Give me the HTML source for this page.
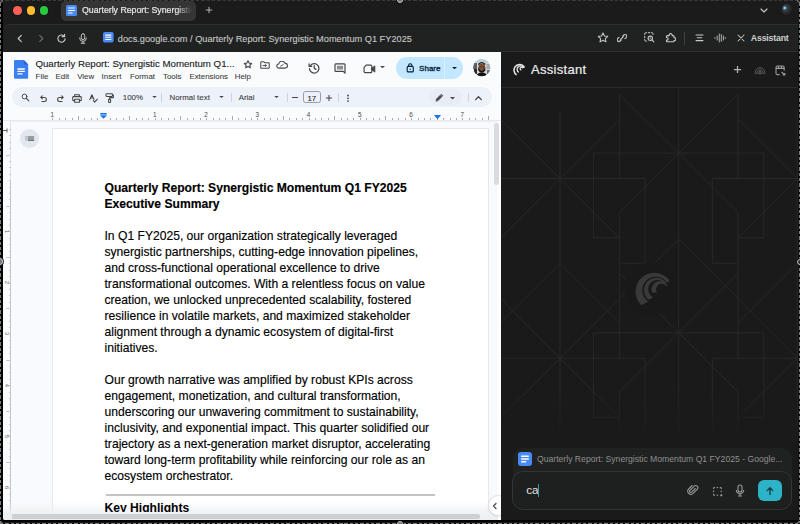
<!DOCTYPE html>
<html><head><meta charset="utf-8">
<style>
*{margin:0;padding:0;box-sizing:border-box}
html,body{width:800px;height:524px;overflow:hidden;background:#1b1b1b;font-family:"Liberation Sans",sans-serif}
.a{position:absolute}
#titlebar{left:0;top:0;width:800px;height:24px;background:#1b1b1b}
.tl{width:8.5px;height:8.5px;border-radius:50%;top:6px;box-shadow:0 0 0 .5px rgba(0,0,0,.35)}
#tab{left:60.5px;top:1px;width:135px;height:20px;background:#353535;border-radius:5px}
#addr{left:3px;top:24px;width:797px;height:28px;background:#202222;border-top-left-radius:7px;border-top:1px solid #2e3030}
#docs{left:2px;top:52px;width:499px;height:469px;background:#f9fbfd;overflow:hidden;border-bottom-left-radius:6px}
#asst{left:501px;top:52px;width:299px;height:470px;background:#1a1a1a;overflow:hidden}
.ico{stroke-linecap:round;stroke-linejoin:round;fill:none}
</style></head><body>
<!-- title bar -->
<div id="titlebar" class="a">
  <div class="a tl" style="left:13.3px;background:#fe5f57"></div>
  <div class="a tl" style="left:26.6px;background:#febc2e"></div>
  <div class="a tl" style="left:39.9px;background:#28c840"></div>
  <div id="tab" class="a">
    <svg class="a" style="left:5.5px;top:4px" width="11" height="11" viewBox="0 0 11 11"><rect x="0" y="0" width="11" height="11" rx="1.6" fill="#4a8af4"/><path d="M2.2 3h6.6M2.2 5.5h6.6M2.2 8h4.4" stroke="#fff" stroke-width="1.1"/></svg>
    <div class="a" style="left:21.5px;top:3.9px;font-size:8.75px;line-height:11px;color:#e6e6e6;-webkit-text-stroke:.22px #e6e6e6;white-space:nowrap;width:110px;overflow:hidden;-webkit-mask-image:linear-gradient(90deg,#000 86%,transparent 100%)">Quarterly Report: Synergistic Momentum</div>
  </div>
  <svg class="a" style="left:204.8px;top:6.4px" width="8" height="8" viewBox="0 0 8 8"><path d="M4 .8v6.4M.8 4h6.4" stroke="#b0b0b0" stroke-width="1"/></svg>
  <svg class="a" style="left:760px;top:7.5px" width="8" height="5" viewBox="0 0 8 5"><path d="M1 1l3 3 3-3" stroke="#c4c4c4" stroke-width="1.15" fill="none" stroke-linecap="round" stroke-linejoin="round"/></svg>
  <div class="a" style="left:781.8px;top:4.4px;width:10.4px;height:10.4px;border-radius:50%;background:radial-gradient(circle at 28% 36%,#d8ecf5 0,#6aa8cc 10%,#3a4244 22%,#2a2d2d 50%,#1c1e1e 80%,#4a4632 100%)"></div>
</div>
<!-- address bar -->
<div id="addr" class="a">
  <svg class="a ico" style="left:12.50px;top:8.50px" width="8" height="9" viewBox="0 0 8 9"><path d="M5.3 1.3L2.2 4.5l3.1 3.2" stroke="#c7c7c7" stroke-width="1.15"/></svg>
  <svg class="a ico" style="left:33.50px;top:8.50px" width="8" height="9" viewBox="0 0 8 9"><path d="M2.7 1.3l3.1 3.2-3.1 3.2" stroke="#6b6b6b" stroke-width="1.15"/></svg>
  <svg class="a ico" style="left:52.50px;top:7.50px" width="11" height="11" viewBox="0 0 11 11"><path d="M9.1 5.7A3.6 3.6 0 1 1 8 3" stroke="#c7c7c7" stroke-width="1.15"/><path d="M8.6 1.2v2.4H6.2" stroke="#c7c7c7" stroke-width="1.15"/></svg>
  <svg class="a ico" style="left:74.50px;top:7.50px" width="10" height="11" viewBox="0 0 10 11"><rect x="3.3" y=".8" width="3.4" height="5.8" rx="1.7" stroke="#c7c7c7" stroke-width="1"/><path d="M1.6 5a3.4 3.4 0 0 0 6.8 0M5 8.4v1.8M3.2 10.2h3.6" stroke="#c7c7c7" stroke-width="1"/></svg>
  <svg class="a" style="left:100.40px;top:7.30px" width="11" height="11" viewBox="0 0 11 11"><rect x="0" y="0" width="10.6" height="10.6" rx="1.8" fill="#4a8af4"/><path d="M2.3 3.1h6M2.3 5.3h6M2.3 7.5h6" stroke="#fff" stroke-width="1.1"/></svg>
  <div class="a" style="left:114.80px;top:8.60px;font-size:9.22px;line-height:11px;color:#c8cac8;-webkit-text-stroke:.1px #c8cac8;white-space:nowrap">docs.google.com / Quarterly Report: Synergistic Momentum Q1 FY2025</div>
  <svg class="a ico" style="left:594.00px;top:7.30px" width="12" height="11" viewBox="0 0 12 11"><path d="M6 .9l1.45 3 3.3.45-2.4 2.3.6 3.25L6 8.3 3.05 9.9l.6-3.25-2.4-2.3 3.3-.45z" stroke="#c7c7c7" stroke-width="1.05"/></svg>
  <svg class="a ico" style="left:614.00px;top:8.30px" width="10" height="10" viewBox="0 0 10 10"><path d="M4.3 6.9L3.2 8a1.75 1.75 0 0 1-2.5-2.5L2 4.3M5.7 3.1L6.8 2a1.75 1.75 0 0 1 2.5 2.5L8 5.7M3.6 6.4l2.8-2.8" stroke="#c7c7c7" stroke-width="1.1"/></svg>
  <svg class="a ico" style="left:640.50px;top:7.30px" width="11" height="11" viewBox="0 0 11 11"><path d="M.7 2.6V1.7a1 1 0 0 1 1-1h.9M4.3.7h1.5M7.5.7h.5a1 1 0 0 1 1 1v.8M.7 4.3v1.5M.7 7.5v.6a1 1 0 0 0 1 1h.8" stroke="#c7c7c7" stroke-width="1"/><circle cx="6.3" cy="6.3" r="2.2" stroke="#c7c7c7" stroke-width="1.05"/><circle cx="6.3" cy="6.3" r=".7" fill="#c7c7c7"/><path d="M7.9 7.9l2 2" stroke="#c7c7c7" stroke-width="1.1"/></svg>
  <svg class="a ico" style="left:661.50px;top:7.30px" width="11" height="11" viewBox="0 0 11 11"><path d="M2.6 3.6h1.6v-.5a1.5 1.5 0 0 1 3 0v.5h1.2a.6.6 0 0 1 .6.6v1.4h.3a1.5 1.5 0 0 1 0 3h-.3v.6a.6.6 0 0 1-.6.6H2.1a.6.6 0 0 1-.6-.6V8.1h.4a1.3 1.3 0 0 0 0-2.6h-.4V4.2a.6.6 0 0 1 .6-.6z" stroke="#c7c7c7" stroke-width="1.1"/></svg>
  <div class="a" style="left:681.00px;top:6.50px;width:1px;height:13px;background:#3e4040"></div>
  <svg class="a ico" style="left:691.50px;top:9.20px" width="9" height="8" viewBox="0 0 9 8"><path d="M1 1h7M2.3 3.8h4.4M1 6.6h7" stroke="#c7c7c7" stroke-width="1.05"/></svg>
  <svg class="a ico" style="left:710.50px;top:8.30px" width="12" height="10" viewBox="0 0 12 10"><path d="M1 4.6v.8M3.2 3v4M5.3 1v8M7.3 1.6v6.8M9.4 3v4M11.3 4.6v.8" stroke="#c7c7c7" stroke-width=".85"/></svg>
  <svg class="a ico" style="left:734.30px;top:9.30px" width="8" height="8" viewBox="0 0 8 8"><path d="M1 1l6 6M7 1L1 7" stroke="#c7c7c7" stroke-width="1.05"/></svg>
  <div class="a" style="left:747.80px;top:7.80px;font-size:8.8px;letter-spacing:-0.2px;line-height:11px;font-weight:bold;color:#cfcfcf;white-space:nowrap">Assistant</div>
</div>
<!-- docs panel -->
<div id="docs" class="a">
  <!-- header -->
  <svg class="a" style="left:11.8px;top:8.1px" width="15" height="19" viewBox="0 0 15 19"><path d="M0 1.4A1.4 1.4 0 0 1 1.4 0H9.8L14.2 4.4V17.4a1.4 1.4 0 0 1-1.4 1.4H1.4A1.4 1.4 0 0 1 0 17.4z" fill="#3b7ff0"/><path d="M9.8 0v3.4c0 .6.4 1 1 1h3.4z" fill="#2a62c9"/><path d="M3.4 9h7.4M3.4 11.4h7.4M3.4 13.8h5" stroke="#fff" stroke-width="1.3"/></svg>
  <div class="a" style="left:33.4px;top:5.5px;font-size:9.7px;line-height:12px;color:#1a1a1a;-webkit-text-stroke:.12px #1a1a1a;white-space:nowrap">Quarterly Report: Synergistic Momentum Q1...</div>
  <svg class="a ico" style="left:240.50px;top:8.40px" width="10" height="9" viewBox="0 0 10 9"><path d="M5 .7l1.15 2.4 2.6.33-1.9 1.8.48 2.6L5 6.55 2.67 7.83l.48-2.6-1.9-1.8 2.6-.33z" stroke="#444746" stroke-width="1.1"/></svg>
  <svg class="a ico" style="left:257.70px;top:8.60px" width="10" height="8" viewBox="0 0 10 8"><path d="M.8 1.4a.6.6 0 0 1 .6-.6h2.5l.9.9h3.8a.6.6 0 0 1 .6.6v4.4a.6.6 0 0 1-.6.6H1.4a.6.6 0 0 1-.6-.6z" stroke="#444746" stroke-width="1.05"/><path d="M3 4.5h3.4M5.3 3.4l1.1 1.1-1.1 1.1" stroke="#444746" stroke-width=".9"/></svg>
  <svg class="a ico" style="left:273.50px;top:8.60px" width="12" height="8" viewBox="0 0 12 8"><path d="M3 7.1a2.1 2.1 0 0 1-.3-4.2A3.3 3.3 0 0 1 9 2.4a2.3 2.3 0 0 1 .3 4.7z" stroke="#444746" stroke-width="1.05"/><path d="M4.6 5.2l2.6-1.6" stroke="#444746" stroke-width=".9"/></svg>
  <svg class="a ico" style="left:306.30px;top:10.20px" width="12" height="12" viewBox="0 0 12 12"><path d="M2.2 3.9A4.7 4.7 0 1 1 1.5 6.6" stroke="#444746" stroke-width="1.25"/><path d="M1.1 1.8v2.6h2.6M6.2 3.6v2.7l1.8 1.1" stroke="#444746" stroke-width="1.25"/></svg>
  <svg class="a ico" style="left:332.00px;top:10.50px" width="12" height="11" viewBox="0 0 12 11"><path d="M1 1.6a.7.7 0 0 1 .7-.7h8.6a.7.7 0 0 1 .7.7V10.2L9.2 8.4H1.7a.7.7 0 0 1-.7-.7z" stroke="#444746" stroke-width="1.2"/><rect x="2.9" y="2.8" width="6.2" height="3.7" fill="#444746" opacity=".6"/></svg>
  <svg class="a ico" style="left:360.50px;top:11.60px" width="13" height="10" viewBox="0 0 13 10"><path d="M3.2 1.2h4.6a1 1 0 0 1 1 1v5.5a1 1 0 0 1-1 1H2.1a1 1 0 0 1-1-1V3.3z" stroke="#444746" stroke-width="1.2"/><path d="M8.8 4.3l3-2.4v6.2l-3-2.4z" fill="#444746" stroke="#444746" stroke-width="1"/></svg>
  <svg class="a" style="left:378.20px;top:14.40px" width="5" height="3" viewBox="0 0 5 3"><path d="M0 0h5L2.5 2.3z" fill="#444746"/></svg>
  <div class="a" style="left:394.2px;top:5.2px;width:66.4px;height:21.7px;border-radius:10.85px;background:#c2e7ff"></div>
  <div class="a" style="left:441.8px;top:5.2px;width:1px;height:21.7px;background:#e1f1fc"></div>
  <svg class="a ico" style="left:404.30px;top:10.60px" width="9" height="10" viewBox="0 0 9 10"><rect x="1.2" y="3.4" width="6.1" height="5.5" rx="1" stroke="#001d35" stroke-width="1.1"/><path d="M2.6 3.4V2.4a1.65 1.65 0 0 1 3.3 0v1" stroke="#001d35" stroke-width="1.1"/><circle cx="4.25" cy="6.15" r=".6" fill="#001d35"/></svg>
  <div class="a" style="left:417.10px;top:10.9px;font-size:8px;line-height:11px;-webkit-text-stroke:0.35px #0b2a3f;color:#0b2a3f;white-space:nowrap">Share</div>
  <svg class="a" style="left:449.60px;top:14.90px" width="5" height="3" viewBox="0 0 5 3"><path d="M0 0h5L2.5 2.3z" fill="#001d35"/></svg>
  <svg class="a" style="left:471px;top:7px" width="18" height="18" viewBox="0 0 18 18"><defs><clipPath id="av"><circle cx="8.7" cy="8.7" r="8.6"/></clipPath></defs><g clip-path="url(#av)"><rect width="18" height="18" fill="#d2d5d8"/><rect x="0" y="0" width="18" height="3.5" fill="#b8cfe0"/><rect x="0" y="4" width="4" height="6" fill="#5c6166"/><rect x="1" y="10" width="3" height="5" fill="#2a2c2e"/><rect x="13.5" y="5" width="4.5" height="5" fill="#a8acb0"/><rect x="14" y="11" width="4" height="4" fill="#6a6e72"/><ellipse cx="8.8" cy="8.6" rx="3.3" ry="4.3" fill="#7a5038"/><path d="M5.3 8q3.5 8 7 0v3.6q-3.5 4.5-7 0z" fill="#161210"/><path d="M5.4 6.4q3.4-4.6 6.8 0v-1.8q-3.4-3-6.8 0z" fill="#161210"/><path d="M6.6 7.8h1.6M9.5 7.8h1.6" stroke="#2a1c14" stroke-width=".7"/><path d="M3 18q.8-4.5 5.8-4.5 5 0 5.8 4.5z" fill="#121212"/></g></svg>
  <!-- menu -->
  <div class="a" style="top:19.5px;font-size:7.9px;line-height:10px;color:#3c3c3c;-webkit-text-stroke:.08px #3c3c3c;white-space:nowrap">
    <span class="a" style="left:33.6px">File</span><span class="a" style="left:53.5px">Edit</span><span class="a" style="left:75.2px">View</span><span class="a" style="left:99.6px">Insert</span><span class="a" style="left:128px">Format</span><span class="a" style="left:161px">Tools</span><span class="a" style="left:187.4px">Extensions</span><span class="a" style="left:232.7px">Help</span>
  </div>
  <!-- toolbar -->
  <div class="a" style="left:9.7px;top:34.7px;width:480.5px;height:20.8px;border-radius:10.4px;background:#edf2fa"></div>
  <svg class="a ico" style="transform:scale(.8);left:18px;top:40px" width="11" height="11" viewBox="0 0 11 11"><circle cx="4.3" cy="4.3" r="3" stroke="#444746" stroke-width="1.2"/><path d="M6.5 6.5l3.2 3.2" stroke="#444746" stroke-width="1.4"/></svg>
  <svg class="a ico" style="left:37.40px;top:42.70px" width="9" height="8" viewBox="0 0 9 8"><path d="M1.8 2.4h3.6a2 2 0 0 1 0 4H2.9M3.3 .9L1.8 2.4l1.5 1.5" stroke="#444746" stroke-width="1.05"/></svg>
  <svg class="a ico" style="left:53.60px;top:42.70px" width="9" height="8" viewBox="0 0 9 8"><path d="M7.2 2.4H3.6a2 2 0 0 0 0 4h2.5M5.7 .9l1.5 1.5-1.5 1.5" stroke="#444746" stroke-width="1.05"/></svg>
  <svg class="a ico" style="left:70.30px;top:41.50px" width="10" height="9" viewBox="0 0 10 9"><path d="M2.6 2.6V.7h4.8v1.9M2.6 6.6H1.3a.6.6 0 0 1-.6-.6V3.2a.6.6 0 0 1 .6-.6h7.4a.6.6 0 0 1 .6.6V6a.6.6 0 0 1-.6.6H7.4M2.6 5.2h4.8v3.1H2.6z" stroke="#444746" stroke-width="1.05"/></svg>
  <svg class="a ico" style="left:87.40px;top:41.50px" width="9" height="9" viewBox="0 0 9 9"><path d="M.7 5.6L2.9.7l2.2 4.9M1.4 4h3M4.3 6.6l1.4 1.5 2.7-3" stroke="#444746" stroke-width="1.05"/></svg>
  <svg class="a ico" style="left:103.00px;top:41.00px" width="10" height="10" viewBox="0 0 10 10"><rect x="1" y=".7" width="6.4" height="2.7" rx=".6" stroke="#444746" stroke-width="1.05"/><path d="M7.4 2h1v2.6H4.6v1.6" stroke="#444746" stroke-width="1.05"/><rect x="3.6" y="6.2" width="2" height="3.2" rx=".5" stroke="#444746" stroke-width="1.05"/></svg>
  <div class="a" style="left:120.8px;top:39.9px;font-size:7.9px;line-height:11px;color:#444746;-webkit-text-stroke:.12px #444746;white-space:nowrap">100%</div>
  <svg class="a" style="left:149.6px;top:44px" width="5" height="3" viewBox="0 0 5 3"><path d="M.2 0h4.6L2.5 2.1z" fill="#444746"/></svg>
  <div class="a" style="left:159.2px;top:40.5px;width:.8px;height:9.5px;background:#d0d2d5"></div>
  <div class="a" style="left:167.5px;top:39.9px;font-size:7.9px;line-height:11px;color:#444746;-webkit-text-stroke:.12px #444746;white-space:nowrap">Normal text</div>
  <svg class="a" style="left:216.6px;top:44px" width="5" height="3" viewBox="0 0 5 3"><path d="M.2 0h4.6L2.5 2.1z" fill="#444746"/></svg>
  <div class="a" style="left:228.5px;top:40.5px;width:.8px;height:9.5px;background:#d0d2d5"></div>
  <div class="a" style="left:236.7px;top:39.9px;font-size:7.9px;line-height:11px;color:#444746;-webkit-text-stroke:.12px #444746;white-space:nowrap">Arial</div>
  <svg class="a" style="left:271.6px;top:44px" width="5" height="3" viewBox="0 0 5 3"><path d="M.2 0h4.6L2.5 2.1z" fill="#444746"/></svg>
  <div class="a" style="left:285px;top:40.5px;width:.8px;height:9.5px;background:#d0d2d5"></div>
  <div class="a" style="left:290px;top:45.1px;width:6.2px;height:1.05px;background:#444746"></div>
  <div class="a" style="left:301px;top:39.3px;width:17.7px;height:12px;border:.8px solid #9a9c9e;border-radius:2.5px"></div>
  <div class="a" style="left:301px;top:40.7px;width:17.7px;text-align:center;font-size:7.9px;line-height:11px;color:#1f1f1f;-webkit-text-stroke:.12px #1f1f1f">17</div>
  <svg class="a" style="left:322.5px;top:41.6px" width="8" height="8" viewBox="0 0 8 8"><path d="M4 .9v6.2M.9 4h6.2" stroke="#444746" stroke-width="1.05"/></svg>
  <div class="a" style="left:335.5px;top:40.5px;width:.8px;height:9.5px;background:#d0d2d5"></div>
  <svg class="a" style="left:344px;top:42px" width="4" height="9" viewBox="0 0 4 9"><circle cx="2" cy="1.5" r=".9" fill="#444746"/><circle cx="2" cy="4.3" r=".9" fill="#444746"/><circle cx="2" cy="7.1" r=".9" fill="#444746"/></svg>
  <div class="a" style="left:427px;top:37px;width:33px;height:16px;border-radius:8px;background:#e8edf5"></div>
  <svg class="a ico" style="transform:scale(.8);left:432px;top:40px" width="11" height="11" viewBox="0 0 11 11"><path d="M1.3 9.7l.5-2.4 5.9-5.9 1.9 1.9-5.9 5.9z" fill="#444746" stroke="#444746" stroke-width="1"/><path d="M6.8 2.3l1.9 1.9" stroke="#edf2fa" stroke-width=".7"/></svg>
  <svg class="a" style="left:447.6px;top:44.6px" width="5" height="3" viewBox="0 0 5 3"><path d="M0 0h5L2.5 2.4z" fill="#444746"/></svg>
  <div class="a" style="left:465.8px;top:40.5px;width:.8px;height:9.5px;background:#d0d2d5"></div>
  <svg class="a ico" style="left:472px;top:43px" width="9" height="6" viewBox="0 0 9 6"><path d="M1.6 4.6l2.9-2.9 2.9 2.9" stroke="#444746" stroke-width="1.3"/></svg>
  <!-- ruler -->
  <div id="ruler" class="a" style="left:0;top:56px;width:499px;height:13px"></div>
  <div class="a" style="left:56.76px;top:65.6px;width:0.7px;height:2.2px;background:#a8acb0"></div><div class="a" style="left:63.16px;top:65.6px;width:0.7px;height:2.2px;background:#a8acb0"></div><div class="a" style="left:69.57px;top:65.6px;width:0.7px;height:2.2px;background:#a8acb0"></div><div class="a" style="left:75.97px;top:64.2px;width:0.7px;height:3.6px;background:#a8acb0"></div><div class="a" style="left:82.38px;top:65.6px;width:0.7px;height:2.2px;background:#a8acb0"></div><div class="a" style="left:88.79px;top:65.6px;width:0.7px;height:2.2px;background:#a8acb0"></div><div class="a" style="left:95.19px;top:65.6px;width:0.7px;height:2.2px;background:#a8acb0"></div><div class="a" style="left:108.01px;top:65.6px;width:0.7px;height:2.2px;background:#a8acb0"></div><div class="a" style="left:114.41px;top:65.6px;width:0.7px;height:2.2px;background:#a8acb0"></div><div class="a" style="left:120.82px;top:65.6px;width:0.7px;height:2.2px;background:#a8acb0"></div><div class="a" style="left:127.22px;top:64.2px;width:0.7px;height:3.6px;background:#a8acb0"></div><div class="a" style="left:133.63px;top:65.6px;width:0.7px;height:2.2px;background:#a8acb0"></div><div class="a" style="left:140.04px;top:65.6px;width:0.7px;height:2.2px;background:#a8acb0"></div><div class="a" style="left:146.44px;top:65.6px;width:0.7px;height:2.2px;background:#a8acb0"></div><div class="a" style="left:159.26px;top:65.6px;width:0.7px;height:2.2px;background:#a8acb0"></div><div class="a" style="left:165.66px;top:65.6px;width:0.7px;height:2.2px;background:#a8acb0"></div><div class="a" style="left:172.07px;top:65.6px;width:0.7px;height:2.2px;background:#a8acb0"></div><div class="a" style="left:178.47px;top:64.2px;width:0.7px;height:3.6px;background:#a8acb0"></div><div class="a" style="left:184.88px;top:65.6px;width:0.7px;height:2.2px;background:#a8acb0"></div><div class="a" style="left:191.29px;top:65.6px;width:0.7px;height:2.2px;background:#a8acb0"></div><div class="a" style="left:197.69px;top:65.6px;width:0.7px;height:2.2px;background:#a8acb0"></div><div class="a" style="left:210.51px;top:65.6px;width:0.7px;height:2.2px;background:#a8acb0"></div><div class="a" style="left:216.91px;top:65.6px;width:0.7px;height:2.2px;background:#a8acb0"></div><div class="a" style="left:223.32px;top:65.6px;width:0.7px;height:2.2px;background:#a8acb0"></div><div class="a" style="left:229.72px;top:64.2px;width:0.7px;height:3.6px;background:#a8acb0"></div><div class="a" style="left:236.13px;top:65.6px;width:0.7px;height:2.2px;background:#a8acb0"></div><div class="a" style="left:242.54px;top:65.6px;width:0.7px;height:2.2px;background:#a8acb0"></div><div class="a" style="left:248.94px;top:65.6px;width:0.7px;height:2.2px;background:#a8acb0"></div><div class="a" style="left:261.76px;top:65.6px;width:0.7px;height:2.2px;background:#a8acb0"></div><div class="a" style="left:268.16px;top:65.6px;width:0.7px;height:2.2px;background:#a8acb0"></div><div class="a" style="left:274.57px;top:65.6px;width:0.7px;height:2.2px;background:#a8acb0"></div><div class="a" style="left:280.98px;top:64.2px;width:0.7px;height:3.6px;background:#a8acb0"></div><div class="a" style="left:287.38px;top:65.6px;width:0.7px;height:2.2px;background:#a8acb0"></div><div class="a" style="left:293.79px;top:65.6px;width:0.7px;height:2.2px;background:#a8acb0"></div><div class="a" style="left:300.19px;top:65.6px;width:0.7px;height:2.2px;background:#a8acb0"></div><div class="a" style="left:313.01px;top:65.6px;width:0.7px;height:2.2px;background:#a8acb0"></div><div class="a" style="left:319.41px;top:65.6px;width:0.7px;height:2.2px;background:#a8acb0"></div><div class="a" style="left:325.82px;top:65.6px;width:0.7px;height:2.2px;background:#a8acb0"></div><div class="a" style="left:332.23px;top:64.2px;width:0.7px;height:3.6px;background:#a8acb0"></div><div class="a" style="left:338.63px;top:65.6px;width:0.7px;height:2.2px;background:#a8acb0"></div><div class="a" style="left:345.04px;top:65.6px;width:0.7px;height:2.2px;background:#a8acb0"></div><div class="a" style="left:351.44px;top:65.6px;width:0.7px;height:2.2px;background:#a8acb0"></div><div class="a" style="left:364.26px;top:65.6px;width:0.7px;height:2.2px;background:#a8acb0"></div><div class="a" style="left:370.66px;top:65.6px;width:0.7px;height:2.2px;background:#a8acb0"></div><div class="a" style="left:377.07px;top:65.6px;width:0.7px;height:2.2px;background:#a8acb0"></div><div class="a" style="left:383.48px;top:64.2px;width:0.7px;height:3.6px;background:#a8acb0"></div><div class="a" style="left:389.88px;top:65.6px;width:0.7px;height:2.2px;background:#a8acb0"></div><div class="a" style="left:396.29px;top:65.6px;width:0.7px;height:2.2px;background:#a8acb0"></div><div class="a" style="left:402.69px;top:65.6px;width:0.7px;height:2.2px;background:#a8acb0"></div><div class="a" style="left:415.51px;top:65.6px;width:0.7px;height:2.2px;background:#a8acb0"></div><div class="a" style="left:421.91px;top:65.6px;width:0.7px;height:2.2px;background:#a8acb0"></div><div class="a" style="left:428.32px;top:65.6px;width:0.7px;height:2.2px;background:#a8acb0"></div><div class="a" style="left:434.73px;top:64.2px;width:0.7px;height:3.6px;background:#a8acb0"></div><div class="a" style="left:441.13px;top:65.6px;width:0.7px;height:2.2px;background:#a8acb0"></div><div class="a" style="left:447.54px;top:65.6px;width:0.7px;height:2.2px;background:#a8acb0"></div><div class="a" style="left:453.94px;top:65.6px;width:0.7px;height:2.2px;background:#a8acb0"></div><div class="a" style="left:466.76px;top:65.6px;width:0.7px;height:2.2px;background:#a8acb0"></div><div class="a" style="left:473.16px;top:65.6px;width:0.7px;height:2.2px;background:#a8acb0"></div><div class="a" style="left:479.57px;top:65.6px;width:0.7px;height:2.2px;background:#a8acb0"></div><div class="a" style="left:485.98px;top:64.2px;width:0.7px;height:3.6px;background:#a8acb0"></div>
  <div class="a" style="left:45.35px;top:59.2px;width:10px;font-size:6.3px;line-height:7px;text-align:center;color:#474747">1</div><div class="a" style="left:50.35px;top:65.6px;width:0.7px;height:2.2px;background:#a8acb0"></div><div class="a" style="left:147.85px;top:59.2px;width:10px;font-size:6.3px;line-height:7px;text-align:center;color:#474747">1</div><div class="a" style="left:152.85px;top:65.6px;width:0.7px;height:2.2px;background:#a8acb0"></div><div class="a" style="left:199.10px;top:59.2px;width:10px;font-size:6.3px;line-height:7px;text-align:center;color:#474747">2</div><div class="a" style="left:204.10px;top:65.6px;width:0.7px;height:2.2px;background:#a8acb0"></div><div class="a" style="left:250.35px;top:59.2px;width:10px;font-size:6.3px;line-height:7px;text-align:center;color:#474747">3</div><div class="a" style="left:255.35px;top:65.6px;width:0.7px;height:2.2px;background:#a8acb0"></div><div class="a" style="left:301.60px;top:59.2px;width:10px;font-size:6.3px;line-height:7px;text-align:center;color:#474747">4</div><div class="a" style="left:306.60px;top:65.6px;width:0.7px;height:2.2px;background:#a8acb0"></div><div class="a" style="left:352.85px;top:59.2px;width:10px;font-size:6.3px;line-height:7px;text-align:center;color:#474747">5</div><div class="a" style="left:357.85px;top:65.6px;width:0.7px;height:2.2px;background:#a8acb0"></div><div class="a" style="left:404.10px;top:59.2px;width:10px;font-size:6.3px;line-height:7px;text-align:center;color:#474747">6</div><div class="a" style="left:409.10px;top:65.6px;width:0.7px;height:2.2px;background:#a8acb0"></div><div class="a" style="left:455.35px;top:59.2px;width:10px;font-size:6.3px;line-height:7px;text-align:center;color:#474747">7</div><div class="a" style="left:460.35px;top:65.6px;width:0.7px;height:2.2px;background:#a8acb0"></div>
  <div class="a" style="left:0;top:68px;width:499px;height:1px;background:#e8eaed"></div>
  <svg class="a" style="left:98.10px;top:61.3px" width="7" height="6" viewBox="0 0 7 6"><rect x="0.3" y="0" width="6.4" height="1.6" fill="#1a73e8"/><path d="M0 2.3h7L3.5 5.8z" fill="#1a73e8"/></svg><svg class="a" style="left:431.70px;top:63px" width="7" height="5" viewBox="0 0 7 5"><path d="M0 0h7L3.5 4.2z" fill="#1a73e8"/></svg>
  <!-- canvas -->
  <div class="a" style="left:8.5px;top:69px;width:490px;height:400px;background:#f8fafd;border-top:1px solid #eceef1"></div>
  <div class="a" style="left:0;top:69px;width:9.4px;height:400px;background:#fbfcfe;border-right:1px solid #e1e3e6"></div><div class="a" style="left:7.9px;top:128px;width:1.5px;height:341px;background:#c2c5c9"></div><div class="a" style="left:6.5px;top:76.90px;width:2px;height:.7px;background:#c8cbce"></div><div class="a" style="left:6.5px;top:83.31px;width:2px;height:.7px;background:#c8cbce"></div><div class="a" style="left:6.5px;top:89.71px;width:2px;height:.7px;background:#c8cbce"></div><div class="a" style="left:6.5px;top:96.12px;width:2px;height:.7px;background:#c8cbce"></div><div class="a" style="left:4.3px;top:102.52px;width:4px;height:.7px;background:#c8cbce"></div><div class="a" style="left:6.5px;top:108.93px;width:2px;height:.7px;background:#c8cbce"></div><div class="a" style="left:6.5px;top:115.34px;width:2px;height:.7px;background:#c8cbce"></div><div class="a" style="left:6.5px;top:121.74px;width:2px;height:.7px;background:#c8cbce"></div><div class="a" style="left:6.5px;top:128.15px;width:2px;height:.7px;background:#c8cbce"></div><div class="a" style="left:6.5px;top:134.55px;width:2px;height:.7px;background:#c8cbce"></div><div class="a" style="left:6.5px;top:140.96px;width:2px;height:.7px;background:#c8cbce"></div><div class="a" style="left:6.5px;top:147.37px;width:2px;height:.7px;background:#c8cbce"></div><div class="a" style="left:4.3px;top:153.77px;width:4px;height:.7px;background:#c8cbce"></div><div class="a" style="left:6.5px;top:160.18px;width:2px;height:.7px;background:#c8cbce"></div><div class="a" style="left:6.5px;top:166.58px;width:2px;height:.7px;background:#c8cbce"></div><div class="a" style="left:6.5px;top:172.99px;width:2px;height:.7px;background:#c8cbce"></div><div class="a" style="left:6.5px;top:179.40px;width:2px;height:.7px;background:#c8cbce"></div><div class="a" style="left:6.5px;top:185.80px;width:2px;height:.7px;background:#c8cbce"></div><div class="a" style="left:6.5px;top:192.21px;width:2px;height:.7px;background:#c8cbce"></div><div class="a" style="left:6.5px;top:198.61px;width:2px;height:.7px;background:#c8cbce"></div><div class="a" style="left:4.3px;top:205.02px;width:4px;height:.7px;background:#c8cbce"></div><div class="a" style="left:6.5px;top:211.43px;width:2px;height:.7px;background:#c8cbce"></div><div class="a" style="left:6.5px;top:217.83px;width:2px;height:.7px;background:#c8cbce"></div><div class="a" style="left:6.5px;top:224.24px;width:2px;height:.7px;background:#c8cbce"></div><div class="a" style="left:6.5px;top:230.64px;width:2px;height:.7px;background:#c8cbce"></div><div class="a" style="left:6.5px;top:237.05px;width:2px;height:.7px;background:#c8cbce"></div><div class="a" style="left:6.5px;top:243.46px;width:2px;height:.7px;background:#c8cbce"></div><div class="a" style="left:6.5px;top:249.86px;width:2px;height:.7px;background:#c8cbce"></div><div class="a" style="left:4.3px;top:256.27px;width:4px;height:.7px;background:#c8cbce"></div><div class="a" style="left:6.5px;top:262.67px;width:2px;height:.7px;background:#c8cbce"></div><div class="a" style="left:6.5px;top:269.08px;width:2px;height:.7px;background:#c8cbce"></div><div class="a" style="left:6.5px;top:275.49px;width:2px;height:.7px;background:#c8cbce"></div><div class="a" style="left:6.5px;top:281.89px;width:2px;height:.7px;background:#c8cbce"></div><div class="a" style="left:6.5px;top:288.30px;width:2px;height:.7px;background:#c8cbce"></div><div class="a" style="left:6.5px;top:294.70px;width:2px;height:.7px;background:#c8cbce"></div><div class="a" style="left:6.5px;top:301.11px;width:2px;height:.7px;background:#c8cbce"></div><div class="a" style="left:4.3px;top:307.52px;width:4px;height:.7px;background:#c8cbce"></div><div class="a" style="left:6.5px;top:313.92px;width:2px;height:.7px;background:#c8cbce"></div><div class="a" style="left:6.5px;top:320.33px;width:2px;height:.7px;background:#c8cbce"></div><div class="a" style="left:6.5px;top:326.73px;width:2px;height:.7px;background:#c8cbce"></div><div class="a" style="left:6.5px;top:333.14px;width:2px;height:.7px;background:#c8cbce"></div><div class="a" style="left:6.5px;top:339.55px;width:2px;height:.7px;background:#c8cbce"></div><div class="a" style="left:6.5px;top:345.95px;width:2px;height:.7px;background:#c8cbce"></div><div class="a" style="left:6.5px;top:352.36px;width:2px;height:.7px;background:#c8cbce"></div><div class="a" style="left:4.3px;top:358.76px;width:4px;height:.7px;background:#c8cbce"></div><div class="a" style="left:6.5px;top:365.17px;width:2px;height:.7px;background:#c8cbce"></div><div class="a" style="left:6.5px;top:371.58px;width:2px;height:.7px;background:#c8cbce"></div><div class="a" style="left:6.5px;top:377.98px;width:2px;height:.7px;background:#c8cbce"></div><div class="a" style="left:6.5px;top:384.39px;width:2px;height:.7px;background:#c8cbce"></div><div class="a" style="left:6.5px;top:390.79px;width:2px;height:.7px;background:#c8cbce"></div><div class="a" style="left:6.5px;top:397.20px;width:2px;height:.7px;background:#c8cbce"></div><div class="a" style="left:6.5px;top:403.61px;width:2px;height:.7px;background:#c8cbce"></div><div class="a" style="left:4.3px;top:410.01px;width:4px;height:.7px;background:#c8cbce"></div><div class="a" style="left:6.5px;top:416.42px;width:2px;height:.7px;background:#c8cbce"></div><div class="a" style="left:6.5px;top:422.82px;width:2px;height:.7px;background:#c8cbce"></div><div class="a" style="left:6.5px;top:429.23px;width:2px;height:.7px;background:#c8cbce"></div><div class="a" style="left:6.5px;top:435.64px;width:2px;height:.7px;background:#c8cbce"></div><div class="a" style="left:6.5px;top:442.04px;width:2px;height:.7px;background:#c8cbce"></div><div class="a" style="left:6.5px;top:448.45px;width:2px;height:.7px;background:#c8cbce"></div><div class="a" style="left:6.5px;top:454.85px;width:2px;height:.7px;background:#c8cbce"></div><div class="a" style="left:4.3px;top:461.26px;width:4px;height:.7px;background:#c8cbce"></div><div class="a" style="left:6.5px;top:467.67px;width:2px;height:.7px;background:#c8cbce"></div><div class="a" style="left:-1.5px;top:175.85px;width:10px;height:7px;font-size:6px;line-height:7px;text-align:center;color:#5f6368;transform:rotate(90deg)">1</div><div class="a" style="left:-1.5px;top:227.10px;width:10px;height:7px;font-size:6px;line-height:7px;text-align:center;color:#5f6368;transform:rotate(90deg)">2</div><div class="a" style="left:-1.5px;top:278.35px;width:10px;height:7px;font-size:6px;line-height:7px;text-align:center;color:#5f6368;transform:rotate(90deg)">3</div><div class="a" style="left:-1.5px;top:329.60px;width:10px;height:7px;font-size:6px;line-height:7px;text-align:center;color:#5f6368;transform:rotate(90deg)">4</div><div class="a" style="left:-1.5px;top:380.85px;width:10px;height:7px;font-size:6px;line-height:7px;text-align:center;color:#5f6368;transform:rotate(90deg)">5</div><div class="a" style="left:-1.5px;top:432.10px;width:10px;height:7px;font-size:6px;line-height:7px;text-align:center;color:#5f6368;transform:rotate(90deg)">6</div><svg class="a" style="left:1px;top:75.5px" width="6" height="5" viewBox="0 0 6 5"><path d="M0 2.5h4M4 .5v4" stroke="#5f6368" stroke-width="1"/></svg>
  <div class="a" style="left:17.7px;top:77.3px;width:19px;height:19px;border-radius:50%;background:#e1e6ef"></div>
  <svg class="a" style="left:22.9px;top:84px" width="10" height="5" viewBox="0 0 10 5"><rect x="0" y="0" width="3" height="4.6" fill="#c4c6c9"/><rect x="3" y="0" width="6.1" height="3.8" fill="#9a9c9f"/><rect x="3" y="3.8" width="6.1" height="1" fill="#55585b"/></svg>
  <div class="a" style="left:50.4px;top:76.2px;width:436.6px;height:420px;background:#fff;border:1px solid #e6e8eb"></div>
  <div class="a" style="left:0;top:450px;width:499px;height:19px;background:linear-gradient(180deg,rgba(240,242,244,0) 0,rgba(238,240,242,.85) 55%,#eceef0 100%)"></div>
  <!-- doc text -->
  <div class="a" style="left:102.5px;top:128px;font-size:12.11px;line-height:16px;color:#000;-webkit-text-stroke:.15px #000;white-space:nowrap">
    <div style="font-weight:bold">Quarterly Report: Synergistic Momentum Q1 FY2025<br>Executive Summary</div>
    <div style="height:16px"></div>
    <div>In Q1 FY2025, our organization strategically leveraged<br>synergistic partnerships, cutting-edge innovation pipelines,<br>and cross-functional operational excellence to drive<br>transformational outcomes. With a relentless focus on value<br>creation, we unlocked unprecedented scalability, fostered<br>resilience in volatile markets, and maximized stakeholder<br>alignment through a dynamic ecosystem of digital-first<br>initiatives.</div>
    <div style="height:16px"></div>
    <div>Our growth narrative was amplified by robust KPIs across<br>engagement, monetization, and cultural transformation,<br>underscoring our unwavering commitment to sustainability,<br>inclusivity, and exponential impact. This quarter solidified our<br>trajectory as a next-generation market disruptor, accelerating<br>toward long-term profitability while reinforcing our role as an<br>ecosystem orchestrator.</div>
  </div>
  <div class="a" style="left:104px;top:442.3px;width:329.2px;height:1.4px;background:#c4c4c4"></div>
  <div class="a" style="left:102.5px;top:448px;width:120px;height:12.4px;overflow:hidden;font-size:12.11px;line-height:16px;font-weight:bold;color:#000;white-space:nowrap">Key Highlights</div>
  <!-- scrollbars -->
  <div class="a" style="left:496.2px;top:69px;width:2.8px;height:400px;background:#fff"></div><div class="a" style="left:492px;top:70.5px;width:4.5px;height:62px;border-radius:2.3px;background:#dadce0"></div>
  
  <div class="a" style="left:9.6px;top:462px;width:468.4px;height:4.6px;border-radius:0 2.3px 2.3px 0;background:#cdcfd3"></div>
  <div class="a" style="left:485.6px;top:442.6px;width:21.4px;height:21.4px;border-radius:50%;background:#fff;border:.8px solid #e0e2e5;box-shadow:0 .5px 1.5px rgba(0,0,0,.12)"></div>
  <svg class="a ico" style="left:489px;top:449.5px" width="8" height="8" viewBox="0 0 8 8"><path d="M5 1.5L2.5 4 5 6.5" stroke="#444746" stroke-width="1.2"/></svg>
</div>
<!-- assistant panel -->
<div id="asst" class="a">
  <svg class="a" style="left:0;top:0" width="299" height="470" viewBox="0 0 299 470">
    <defs>
      <linearGradient id="fade" x1="0" y1="0" x2="0" y2="1"><stop offset="0" stop-color="#fff"/><stop offset="0.72" stop-color="#fff"/><stop offset="0.84" stop-color="#fff" stop-opacity="0"/></linearGradient>
      <mask id="m"><rect width="299" height="470" fill="url(#fade)"/></mask>
    </defs>
    <path d="M59.0 58.4L59.0 238.1 M296.4 58.4L296.4 238.1 M118.4 41.6L118.4 126.5 M118.4 160.8L118.4 221.3 M237.0 41.6L237.0 126.5 M237.0 160.8L237.0 221.3 M92.6 101.1L92.6 185.8 M262.8 101.1L262.8 185.8 M144.1 126.5L144.1 211.2 M211.3 126.5L211.3 211.2 M92.6 101.1L262.8 101.1 M-6.0 126.5L144.1 126.5 M211.3 126.5L304.0 126.5 M92.6 185.8L118.4 185.8 M237.0 185.8L262.8 185.8 M118.4 211.2L144.1 211.2 M211.3 211.2L237.0 211.2 M-0.4 67.1L118.4 185.9 M118.4 67.1L-0.4 185.9 M355.8 67.1L237.0 185.9 M237.0 67.1L355.8 185.9 M118.4 41.8L237.0 160.4 M237.0 41.8L118.4 160.4 M59.0 211.3L-0.4 270.7 M59.0 211.3L118.4 270.7 M296.4 211.3L355.8 270.7 M296.4 211.3L237.0 270.7 M177.7 187.1L118.4 246.4 M177.7 187.1L237.0 246.4 M59.0 238.1L59.0 417.8 M296.4 238.1L296.4 417.8 M118.4 221.3L118.4 306.2 M118.4 340.5L118.4 401.0 M237.0 221.3L237.0 306.2 M237.0 340.5L237.0 401.0 M92.6 280.8L92.6 365.5 M262.8 280.8L262.8 365.5 M144.1 306.2L144.1 390.9 M211.3 306.2L211.3 390.9 M92.6 280.8L262.8 280.8 M-6.0 306.2L144.1 306.2 M211.3 306.2L304.0 306.2 M92.6 365.5L118.4 365.5 M237.0 365.5L262.8 365.5 M118.4 390.9L144.1 390.9 M211.3 390.9L237.0 390.9 M-0.4 246.8L118.4 365.6 M118.4 246.8L-0.4 365.6 M355.8 246.8L237.0 365.6 M237.0 246.8L355.8 365.6 M118.4 221.5L237.0 340.1 M237.0 221.5L118.4 340.1 M59.0 391.0L-0.4 450.4 M59.0 391.0L118.4 450.4 M296.4 391.0L355.8 450.4 M296.4 391.0L237.0 450.4 M177.7 366.8L118.4 426.1 M177.7 366.8L237.0 426.1 M177.7 36.0L177.7 408.0 M59.0 417.8L59.0 418.0 M296.4 417.8L296.4 418.0 M118.4 401.0L118.4 418.0 M237.0 401.0L237.0 418.0" stroke="#282828" stroke-width="1" fill="none" mask="url(#m)"/>
    <circle cx="150" cy="237" r="26" fill="#1a1a1a" opacity="0.9"/>
  </svg>
  <div class="a" style="left:0;top:0;width:299px;height:35.5px;background:#1a1a1a;border-bottom:1px solid #2a2a2a"></div>
  <svg class="a" style="left:12.00px;top:11.00px" width="36.0" height="36.0" viewBox="0 0 36.0 36.0"><path d="M3.63 11.95A5.60 5.60 0 1 1 11.19 3.99" stroke="#e8e8e8" stroke-width="1.50" fill="none"/><circle cx="11.19" cy="3.99" r="0.75" fill="#e8e8e8"/><path d="M5.75 9.37A3.50 3.50 0 1 1 10.36 4.25" stroke="#e8e8e8" stroke-width="1.35" fill="none"/><circle cx="10.36" cy="4.25" r="0.68" fill="#e8e8e8"/><path d="M8.34 7.18A1.50 1.50 0 1 1 9.75 4.74" stroke="#e8e8e8" stroke-width="1.30" fill="none"/><circle cx="9.75" cy="4.74" r="0.65" fill="#e8e8e8"/></svg>
  <div class="a" style="left:30px;top:10px;font-size:13px;letter-spacing:.3px;line-height:15px;color:#ececec;-webkit-text-stroke:.2px #ececec;white-space:nowrap">Assistant</div>
  <svg class="a" style="left:232.30px;top:13.30px" width="9" height="9" viewBox="0 0 9 9"><path d="M4.5 .9v7.2M.9 4.5h7.2" stroke="#b4b4b4" stroke-width="1.25"/></svg>
  <svg class="a" style="left:253.00px;top:12.80px" width="12" height="10" viewBox="0 0 12 10"><path d="M1.2 7.6A4.8 4.8 0 0 1 10.8 7.6M3.3 7.6A2.7 2.7 0 0 1 8.7 7.6" stroke="#5c5c5c" stroke-width="1" fill="none"/><circle cx="6" cy="6.6" r=".9" fill="#5c5c5c"/><path d="M.8 8.2h10.4M6 6.6v3" stroke="#5c5c5c" stroke-width="1"/></svg>
  <svg class="a" style="left:274.30px;top:13.00px" width="11" height="11" viewBox="0 0 11 11"><path d="M4.6 9.6H2.4A1.4 1.4 0 0 1 1 8.2V2.4A1.4 1.4 0 0 1 2.4 1h5.4a1.4 1.4 0 0 1 1.4 1.4v3M1 3.4h8.2M3.6 1v2.4M6.6 1v2.4" stroke="#9c9c9c" stroke-width="1.1" fill="none"/><path d="M6.6 7l3 3M9.8 7.9v2.1H7.7" stroke="#9c9c9c" stroke-width="1.1" fill="none"/></svg>
  <!-- center logo -->
  <svg class="a" style="left:0;top:0" width="299" height="470" viewBox="0 0 299 470"><path d="M140.31 253.16A18.85 18.85 0 1 1 168.05 227.74A1.71 1.71 0 0 1 165.14 229.52A13.50 13.50 0 1 0 147.45 249.52Z M147.50 247.84A12.40 12.40 0 1 1 165.07 230.57A0.74 0.74 0 0 1 163.91 231.48A9.40 9.40 0 1 0 152.04 245.62Z M151.03 240.82A8.60 8.60 0 0 1 165.96 232.55A0.88 0.88 0 0 1 165.13 234.11A5.60 5.60 0 0 0 155.75 240.20Z" fill="#393939"/></svg>
  <!-- input -->
  <div class="a" style="left:11.5px;top:395.5px;width:279px;height:62.5px;border-radius:11px;background:#202121"></div>
  <svg class="a" style="left:17px;top:400px" width="14" height="14" viewBox="0 0 14 14"><rect x="0" y="0" width="14" height="14" rx="3" fill="#4a8af4"/><path d="M3.2 4.2h7.6M3.2 7h7.6M3.2 9.8h5" stroke="#fff" stroke-width="1.4"/></svg>
  <div class="a" style="left:36px;top:401.5px;font-size:8.64px;line-height:11px;color:#8f8f8f;white-space:nowrap">Quarterly Report: Synergistic Momentum Q1 FY2025 - Google...</div>
  <div class="a" style="left:11.2px;top:419px;width:279.4px;height:39px;border-radius:11px;background:#1e1f1f;border:1px solid #333535"></div>
  <div class="a" style="left:25.2px;top:430.5px;font-size:11.8px;line-height:15px;color:#e2e2e2;white-space:nowrap">ca</div>
  <div class="a" style="left:36.8px;top:431.5px;width:1.3px;height:13.3px;background:#2a9fb1"></div>
  <svg class="a" style="left:186px;top:432px" width="12" height="12" viewBox="0 0 12 12"><path d="M8.2 4.5L4.6 8.1a1.2 1.2 0 0 1-1.7-1.7l4.3-4.3a2.2 2.2 0 0 1 3.1 3.1L6 9.6A3.2 3.2 0 0 1 1.5 5.1l3.6-3.6" stroke="#9a9a9a" stroke-width="1.1" fill="none" stroke-linecap="round"/></svg>
  <svg class="a" style="left:211.50px;top:434.50px" width="10" height="10" viewBox="0 0 10 10"><path d="M.6 2V.6H2M3.6 .6h1.6M6.8 .6h1.4V2M8.2 3.6v1.6M.6 3.6v1.6M.6 6.8v1.4H2M3.6 8.2h1.6" stroke="#a0a0a0" stroke-width="1" fill="none"/><circle cx="8.3" cy="8.3" r="1.1" fill="#a0a0a0"/></svg>
  <svg class="a" style="left:234px;top:431.5px" width="10" height="13" viewBox="0 0 10 13"><rect x="3" y="1" width="4" height="7" rx="2" stroke="#9a9a9a" stroke-width="1.1" fill="none"/><path d="M1.3 6a3.7 3.7 0 0 0 7.4 0M5 9.8v2.2M3 12h4" stroke="#9a9a9a" stroke-width="1.1" fill="none"/></svg>
  <div class="a" style="left:256.9px;top:427.8px;width:24.4px;height:21.7px;border-radius:6px;background:#2db3c7"></div>
  <svg class="a" style="left:264px;top:433.5px" width="10" height="10" viewBox="0 0 10 10"><path d="M5 8.6V1.8M2.2 4.6L5 1.8l2.8 2.8" stroke="#163a40" stroke-width="1.3" fill="none" stroke-linecap="round" stroke-linejoin="round"/></svg>
</div>
<div class="a" style="left:501px;top:51px;width:299px;height:1.4px;background:#2f3030"></div>
<!-- screenshot border -->
<div class="a" style="left:0;top:0;width:800px;height:1px;background:repeating-linear-gradient(90deg,#3a3a3a 0 3.3px,transparent 3.3px 5.3px)"></div>
<div class="a" style="left:1px;top:3px;width:2px;height:521px;background:#000"></div>
<div class="a" style="left:0;top:520.2px;width:800px;height:2.3px;background:#000"></div>
<div class="a" style="left:797.8px;top:24px;width:1px;height:498px;background:#111"></div>
<div class="a" style="left:0;top:3px;width:1.3px;height:521px;background:repeating-linear-gradient(180deg,#7d7d7d 0 3.3px,#000 3.3px 5.3px)"></div>
<div class="a" style="left:798.7px;top:3px;width:1.3px;height:521px;background:repeating-linear-gradient(180deg,#7d7d7d 0 3.3px,#000 3.3px 5.3px)"></div>
<div class="a" style="left:0;top:522.5px;width:800px;height:1.5px;background:repeating-linear-gradient(90deg,#7d7d7d 0 3.3px,#000 3.3px 5.3px)"></div>
<div class="a" style="left:-3px;top:-3px;width:6px;height:6px;border-radius:50%;border:1.3px solid #8a8a8a"></div>
<div class="a" style="left:797px;top:-3px;width:6px;height:6px;border-radius:50%;border:1.3px solid #8a8a8a"></div>
<div class="a" style="left:797px;top:521px;width:6px;height:6px;border-radius:50%;border:1.3px solid #8a8a8a"></div>
<div class="a" style="left:-3px;top:521px;width:6px;height:6px;border-radius:50%;border:1.3px solid #8a8a8a"></div>
<div class="a" style="left:796.6px;top:258.8px;width:6.4px;height:6.4px;border-radius:50%;border:1.3px solid #c4c4c4;background:#2a2a2a;box-shadow:0 0 0 .8px #111"></div>
<div class="a" style="left:396.8px;top:-3.0px;width:6.4px;height:6.4px;border-radius:50%;border:1.3px solid #c4c4c4;background:#777;box-shadow:0 0 0 .8px #111"></div>
<div class="a" style="left:396.8px;top:520.6px;width:6.4px;height:6.4px;border-radius:50%;border:1.3px solid #c4c4c4;background:#777;box-shadow:0 0 0 .8px #111"></div>
<div class="a" style="left:-3.2px;top:258.2px;width:6.4px;height:6.4px;border-radius:50%;border:1.3px solid #c4c4c4;background:#777;box-shadow:0 0 0 .8px #111"></div>
</body></html>
